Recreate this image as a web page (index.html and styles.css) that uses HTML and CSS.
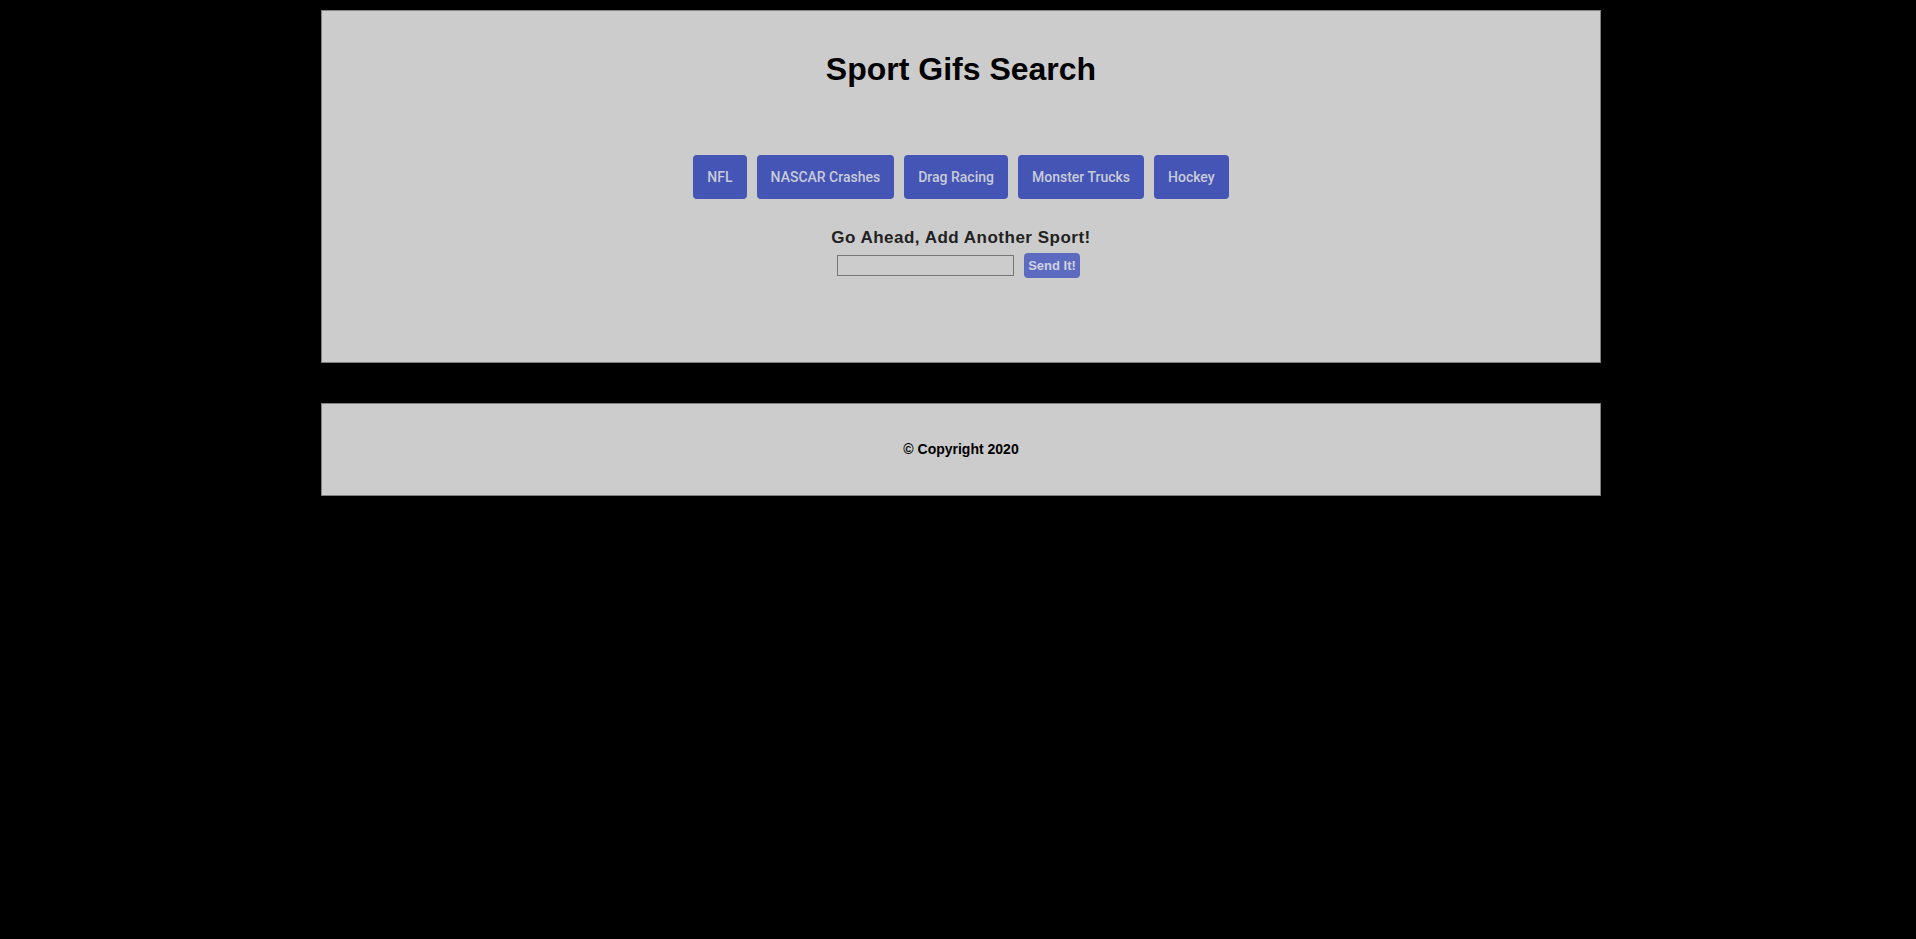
FILE: index.html
```html
<!DOCTYPE html>
<html lang="en">
<head>
<meta charset="utf-8">
<title>Sport Gifs Search</title>
<link rel="stylesheet" href="styles.css">
</head>
<body>
<div class="page">
  <main class="panel">
    <h1 class="title">Sport Gifs Search</h1>
    <div class="sports">
      <button class="sport-btn">NFL</button>
      <button class="sport-btn">NASCAR Crashes</button>
      <button class="sport-btn">Drag Racing</button>
      <button class="sport-btn">Monster Trucks</button>
      <button class="sport-btn">Hockey</button>
    </div>
    <h3 class="add-title">Go Ahead, Add Another Sport!</h3>
    <form class="add-form">
      <input class="add-input" type="text">
      <button class="send-btn" type="button">Send It!</button>
    </form>
  </main>
  <footer class="footer">
    <p class="copy">© Copyright 2020</p>
  </footer>
</div>
</body>
</html>
```
FILE: styles.css
```css
html, body {
  margin: 0;
  padding: 0;
  background: #000;
}
body {
  font-family: "Liberation Sans", Arial, sans-serif;
}
.page {
  width: 1280px;
  margin: 10px 0 0 321px;
  display: flex;
  flex-direction: column;
  gap: 40px;
}
.panel {
  box-sizing: border-box;
  height: 353px;
  background: #cccccc;
  border: 1px solid #808080;
  padding-top: 40px;
  display: flex;
  flex-direction: column;
  align-items: center;
}
.title {
  margin: 0;
  font-size: 32px;
  line-height: 37px;
  font-weight: bold;
  color: #000;
}
.sports {
  margin-top: 67px;
  display: flex;
  gap: 10px;
  justify-content: center;
}
.sport-btn {
  height: 44px;
  padding: 0 14px;
  background: #4455b5;
  color: #c9cbd9;
  border: none;
  border-radius: 4px;
  font-family: Roboto, "Liberation Sans", sans-serif;
  font-size: 14px;
  font-weight: 500;
}
.add-title {
  margin: 30px 0 0;
  font-size: 17px;
  line-height: 18px;
  letter-spacing: 0.5px;
  font-weight: bold;
  color: #222;
}
.add-form {
  margin-top: 6px;
  display: flex;
  align-items: center;
  gap: 10px;
  padding-right: 5px;
}
.add-input {
  box-sizing: border-box;
  width: 177px;
  height: 21px;
  margin: 0;
  border: 1px solid #767676;
  background: transparent;
}
.send-btn {
  box-sizing: border-box;
  width: 56px;
  height: 25px;
  padding: 0;
  border: none;
  border-radius: 4px;
  background: #5c6bc0;
  color: #d0d2e0;
  font-family: "Liberation Sans", Arial, sans-serif;
  font-size: 13px;
  font-weight: bold;
}
.footer {
  box-sizing: border-box;
  height: 93px;
  background: #cccccc;
  border: 1px solid #808080;
  padding-top: 37px;
}
.copy {
  margin: 0;
  text-align: center;
  font-size: 14px;
  line-height: 16px;
  font-weight: bold;
  color: #000;
}
```
